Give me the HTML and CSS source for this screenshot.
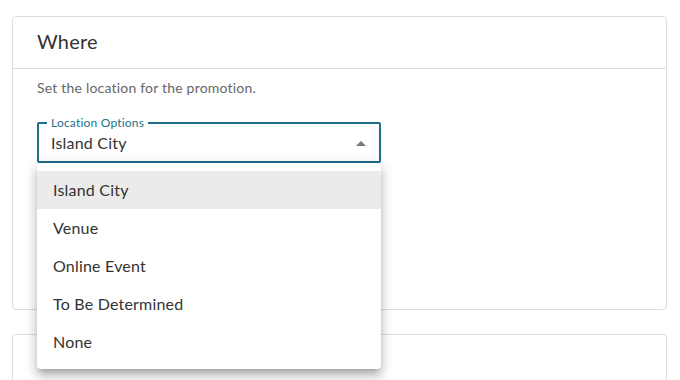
FILE: index.html
```html
<!DOCTYPE html>
<html>
<head>
<meta charset="UTF-8">
<link rel="stylesheet" href="styles.css">
</head>
<body>
<div class="card where">
  <div class="card-header">Where</div>
  <div class="card-body">
    <p class="hint">Set the location for the promotion.</p>
    <div class="select-wrap">
      <div class="select-field">
        <span class="select-label">Location Options</span>
        <span class="select-value">Island City</span>
        <span class="arrow"></span>
      </div>
      <ul class="menu">
        <li class="selected">Island City</li>
        <li>Venue</li>
        <li>Online Event</li>
        <li>To Be Determined</li>
        <li>None</li>
      </ul>
    </div>
  </div>
</div>
<div class="card next"></div>
</body>
</html>
```

FILE: styles.css
```css
* {
  box-sizing: border-box;
  font-family: Lato, "Liberation Sans", sans-serif;
  letter-spacing: 0.2px;
}
body {
  margin: 0;
  padding: 16px 13px 0 12px;
  background-color: #fff;
  overflow: hidden;
}
.card {
  border: 1px solid #dedede;
  border-radius: 4px;
  background-color: #fff;
}
.where {
  height: 294px;
}
.next {
  margin-top: 24px;
  height: 80px;
}
.card-header {
  height: 52px;
  padding: 12px 24px 0 24px;
  font-size: 20px;
  color: #333;
  border-bottom: 1px solid #dedede;
}
.card-body {
  padding: 10px 24px 0 24px;
}
.hint {
  margin: 0 0 26px 0;
  font-size: 14px;
  color: #666;
}
.select-wrap {
  position: relative;
  width: 344px;
}
.select-field {
  position: relative;
  height: 41px;
  padding: 0 12px 0 12px;
  border: 2px solid #1d6f8c;
  border-radius: 2px;
  display: flex;
  align-items: center;
  justify-content: space-between;
}
.select-label {
  position: absolute;
  left: 8px;
  top: -8px;
  padding: 0 4px;
  background-color: #fff;
  font-size: 12px;
  line-height: 14px;
  color: #1d6f8c;
}
.select-value {
  font-size: 16px;
  color: #333;
}
.arrow {
  width: 0;
  height: 0;
  border-left: 5px solid transparent;
  border-right: 5px solid transparent;
  border-bottom: 5px solid #777;
  margin-right: 1px;
  margin-top: 1px;
}
.menu {
  position: absolute;
  left: 0;
  top: 41px;
  width: 344px;
  margin: 0;
  padding: 8px 0;
  list-style: none;
  background-color: #fff;
  border-radius: 4px;
  box-shadow: 0 5px 5px -3px rgba(0,0,0,0.2), 0 8px 10px 1px rgba(0,0,0,0.14), 0 3px 14px 2px rgba(0,0,0,0.12);
}
.menu li {
  height: 38px;
  line-height: 38px;
  padding: 0 16px;
  font-size: 16px;
  color: #333;
}
.menu li.selected {
  background-color: #ebebeb;
}
```
